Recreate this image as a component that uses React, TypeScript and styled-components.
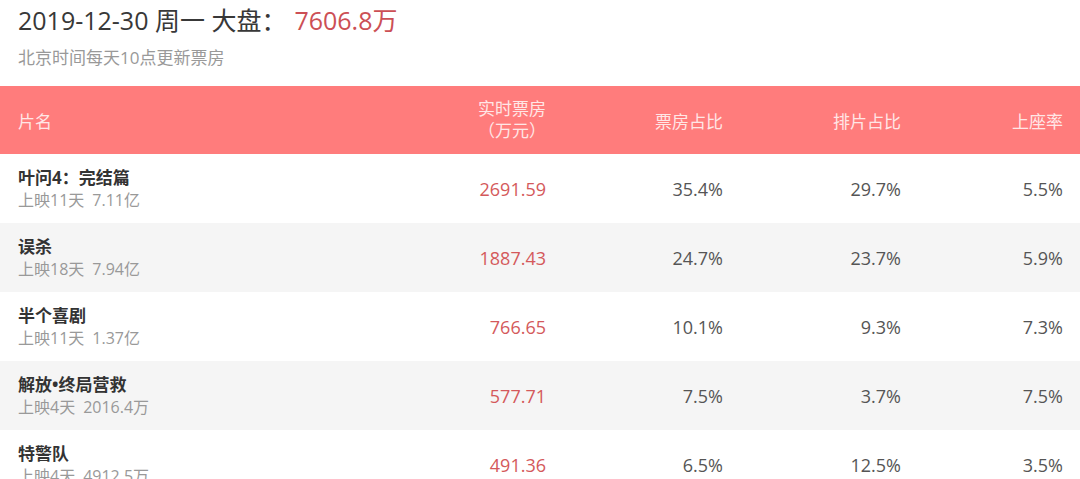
import React from 'react'
import styled, { createGlobalStyle } from 'styled-components'

const Global = createGlobalStyle`
  body {
    margin: 0;
    background: #fff;
    font-family: "Open Sans", "Noto Sans CJK SC", sans-serif;
  }
`;

const Page = styled.div`
  width: 1080px;
  overflow: hidden;
`;

const Head = styled.div`
  padding: 5px 18px 0;
`;

const Title = styled.h1`
  margin: 0;
  font-size: 25px;
  line-height: 30px;
  font-weight: 400;
  color: #383838;
`;

const Total = styled.span`
  color: #cc4f55;
  margin-left: 8px;
`;

const Note = styled.p`
  margin: 13px 0 18px;
  font-size: 17px;
  line-height: 20px;
  color: #999;
`;

const Row = styled.div<{ $head?: boolean; $alt?: boolean }>`
  display: grid;
  grid-template-columns: 1fr 170px 177px 178px 162px;
  align-items: center;
  height: ${p => (p.$head ? 68 : 69)}px;
  padding: 0 17px 0 18px;
  background: ${p => (p.$head ? '#ff7c7c' : p.$alt ? '#f5f5f5' : '#fff')};
  color: ${p => (p.$head ? '#ffe6e6' : '#555')};
  font-size: ${p => (p.$head ? 17 : 18)}px;
`;

const Cell = styled.div`
  text-align: right;
`;

const HeadStack = styled.span`
  display: inline-block;
  text-align: center;
  line-height: 22px;
`;

const Name = styled.div`
  font-size: 17px;
  font-weight: 700;
  color: #333;
  line-height: 22px;
`;

const Sub = styled.div`
  font-size: 16px;
  color: #999;
  line-height: 22px;
`;

const Gross = styled.span`
  margin-left: 8px;
`;

const Money = styled(Cell)`
  color: #d4595b;
`;

const movies = [
  { name: '叶问4：完结篇', days: '上映11天', total: '7.11亿', box: '2691.59', share: '35.4%', sched: '29.7%', seat: '5.5%' },
  { name: '误杀', days: '上映18天', total: '7.94亿', box: '1887.43', share: '24.7%', sched: '23.7%', seat: '5.9%' },
  { name: '半个喜剧', days: '上映11天', total: '1.37亿', box: '766.65', share: '10.1%', sched: '9.3%', seat: '7.3%' },
  { name: '解放•终局营救', days: '上映4天', total: '2016.4万', box: '577.71', share: '7.5%', sched: '3.7%', seat: '7.5%' },
  { name: '特警队', days: '上映4天', total: '4912.5万', box: '491.36', share: '6.5%', sched: '12.5%', seat: '3.5%' },
]

const App = () => {
  return (
    <Page>
      <Global />
      <Head>
        <Title>2019-12-30 周一 大盘：<Total>7606.8万</Total></Title>
        <Note>北京时间每天10点更新票房</Note>
      </Head>
      <Row $head>
        <div>片名</div>
        <Cell><HeadStack>实时票房<br />（万元）</HeadStack></Cell>
        <Cell>票房占比</Cell>
        <Cell>排片占比</Cell>
        <Cell>上座率</Cell>
      </Row>
      {movies.map((m, i) => (
        <Row key={m.name} $alt={i % 2 === 1}>
          <div>
            <Name>{m.name}</Name>
            <Sub>{m.days}<Gross>{m.total}</Gross></Sub>
          </div>
          <Money>{m.box}</Money>
          <Cell>{m.share}</Cell>
          <Cell>{m.sched}</Cell>
          <Cell>{m.seat}</Cell>
        </Row>
      ))}
    </Page>
  )
}

export default App
